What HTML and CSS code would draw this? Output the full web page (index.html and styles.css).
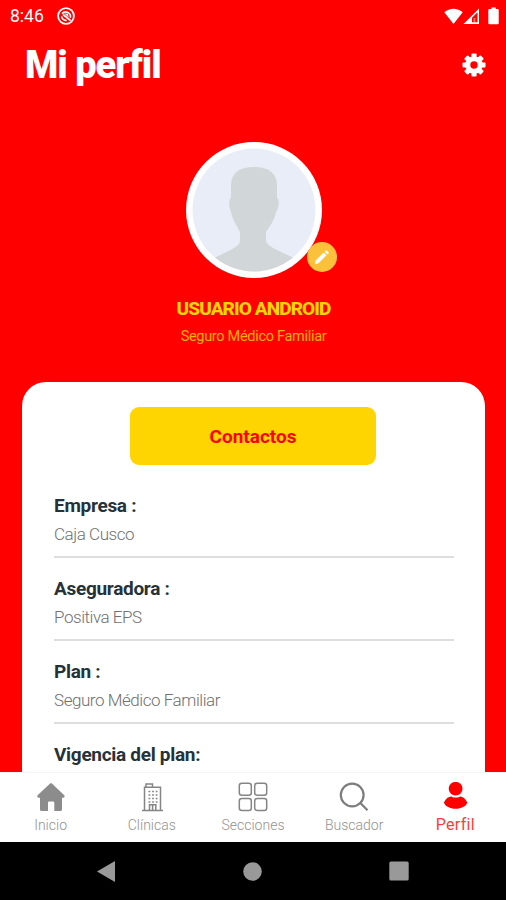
FILE: index.html
```html
<!DOCTYPE html>
<html lang="es">
<head>
    <meta charset="UTF-8">
    <meta name="viewport" content="width=device-width, initial-scale=1.0">
    <title>Mi perfil</title>
    <link rel="stylesheet" href="styles.css">
</head>
<body>
    <div class="app">
        <!-- Barra de estado -->
        <div class="status-bar">
            <span class="status-time">8:46</span>
            <svg class="status-app" width="18" height="18" viewBox="0 0 18 18" fill="none" stroke="#fff">
                <circle cx="9" cy="9" r="7.9" stroke-width="1.8"/>
                <path d="M5 6.8A4.7 4.7 0 0 1 13.3 10.8M4.6 9.4A4.5 4.5 0 0 0 9.6 13.4" stroke-width="1.6"/>
                <path d="M6 7.5L13.6 13.6" stroke-width="1.8"/>
                <path d="M7.2 6.2L11 7L11.6 10.6Z" fill="#fff" stroke="none"/>
            </svg>
            <div class="status-icons">
                <svg width="19" height="17" viewBox="0 0 19 17" fill="#fff">
                    <path d="M0.3 4.3C5.7-0.4 13.3-0.4 18.7 4.3L9.5 16Z"/>
                </svg>
                <svg width="17" height="17" viewBox="0 0 17 17" fill="#fff">
                    <path fill-rule="evenodd" d="M16 .5V16H.5ZM14.5 4.3L9 9.8V14.2H14.5Z"/>
                    <path d="M10.5 10H12.3V14.2H10.5Z" opacity=".45"/>
                </svg>
                <svg class="battery" width="11" height="18" viewBox="0 0 11 18" fill="#fff">
                    <path d="M3.3.5H7.7V2H9.7Q10.7 2 10.7 3V16.3Q10.7 17.3 9.7 17.3H1.3Q.3 17.3 .3 16.3V3Q.3 2 1.3 2H3.3Z"/>
                </svg>
            </div>
        </div>

        <header class="header">
            <h1 class="title">Mi perfil</h1>
            <svg class="settings" width="24" height="24" viewBox="0 0 24 24">
                <g fill="#fff">
                    <circle cx="12" cy="12" r="8.7"/>
                    <rect x="9.4" y=".5" width="5.2" height="23" rx="1"/>
                    <rect x="9.4" y=".5" width="5.2" height="23" rx="1" transform="rotate(45 12 12)"/>
                    <rect x="9.4" y=".5" width="5.2" height="23" rx="1" transform="rotate(90 12 12)"/>
                    <rect x="9.4" y=".5" width="5.2" height="23" rx="1" transform="rotate(135 12 12)"/>
                </g>
                <circle cx="12" cy="12" r="3.7" fill="#f00"/>
            </svg>
        </header>

        <!-- Datos del usuario -->
        <section class="profile">
            <div class="avatar">
                <svg width="136" height="136" viewBox="0 0 136 136">
                    <defs>
                        <clipPath id="face"><circle cx="68" cy="68" r="61.5"/></clipPath>
                    </defs>
                    <circle cx="68" cy="68" r="68" fill="#fff"/>
                    <circle cx="68" cy="68" r="61.5" fill="#e9edf7"/>
                    <path clip-path="url(#face)" fill="#d1d6d8" d="M45 44C45 31 53 25 68 25S91 31 91 44V56C94 57 93 66 90 70C88 79 84 84 80 90V99C81 105 94 109 108 116V136H28V116C42 109 54 105 54 99V90C51 84 47 79 45 70C43 66 42 57 45 56Z"/>
                </svg>
                <button class="edit" aria-label="Editar">
                    <svg width="14" height="14" viewBox="0 0 14 14" fill="#fff">
                        <path d="M0 14L.4 10.7L8.7 2.5L11.5 5.3L3.3 13.6ZM9.5 1.7L10.8.4Q11.3 0 11.8.4L13.6 2.2Q14 2.7 13.6 3.2L12.3 4.5Z"/>
                    </svg>
                </button>
            </div>
            <div class="user-name">USUARIO ANDROID</div>
            <div class="user-plan">Seguro Médico Familiar</div>
        </section>

        <main class="card">
            <button class="contacts">Contactos</button>
            <div class="field">
                <div class="label">Empresa :</div>
                <div class="value">Caja Cusco</div>
            </div>
            <div class="field">
                <div class="label">Aseguradora :</div>
                <div class="value">Positiva EPS</div>
            </div>
            <div class="field">
                <div class="label">Plan :</div>
                <div class="value">Seguro Médico Familiar</div>
            </div>
            <div class="field">
                <div class="label">Vigencia del plan:</div>
            </div>
        </main>

        <!-- Menú inferior -->
        <nav class="tabs">
            <a class="tab">
                <svg width="30" height="30" viewBox="0 0 30 30" fill="#8c8c8c">
                    <path d="M14.1 1.4Q15 .7 15.9 1.4L28.3 13.3Q29.3 15.5 27 15.7H26V27.5Q26 29 24.5 29H18.3V20.7Q18.3 19.5 17 19.5H13Q12 19.5 12 20.7V29H5.5Q4 29 4 27.5V15.7H2.5Q.5 15.3 1.6 13.3Z"/>
                </svg>
                <span>Inicio</span>
            </a>
            <a class="tab">
                <svg width="30" height="30" viewBox="0 0 30 30" fill="none" stroke="#858585" stroke-width="1.5">
                    <path d="M5 28.5H26M7.5 28V5.2H23.5V28M9 5V2H15.5V5M12.5 28V22.7H18.8V28M15.6 23V28"/>
                    <path d="M11.5 9.5H20.5M11.5 13H20.5M11.5 16.5H20.5M11.5 20H20.5" stroke-width="1.7" stroke-dasharray="1.8 1.8"/>
                </svg>
                <span>Clínicas</span>
            </a>
            <a class="tab">
                <svg width="30" height="30" viewBox="0 0 30 30" fill="none" stroke="#858585" stroke-width="1.5">
                    <rect x="1.3" y="1.2" width="12" height="12" rx="2.5"/>
                    <rect x="16.7" y="1.2" width="12" height="12" rx="2.5"/>
                    <rect x="1.3" y="16.5" width="12" height="12" rx="2.5"/>
                    <rect x="16.7" y="16.5" width="12" height="12" rx="2.5"/>
                </svg>
                <span>Secciones</span>
            </a>
            <a class="tab">
                <svg width="30" height="30" viewBox="0 0 30 30" fill="none" stroke="#7d7d7d" stroke-width="2.2">
                    <circle cx="13.2" cy="13" r="11.4"/>
                    <path d="M21.3 21L28.5 28.2"/>
                </svg>
                <span>Buscador</span>
            </a>
            <a class="tab tab-active">
                <svg width="30" height="30" viewBox="0 0 30 30" fill="#f00">
                    <circle cx="15.6" cy="6.7" r="6.9"/>
                    <path d="M3.9 20.5C5.8 16.5 8.8 14.2 11.4 14.4C13.1 16 18.1 16 19.8 14.4C22.4 14.2 25.4 16.5 27.3 20.5C26 24.4 21.1 26.8 15.6 26.8S5.2 24.4 3.9 20.5Z"/>
                </svg>
                <span>Perfil</span>
            </a>
        </nav>

        <div class="system-bar">
            <svg width="18" height="21" viewBox="0 0 18 21" fill="#999"><path d="M18 0V21L0 10.5Z"/></svg>
            <svg width="19" height="19" viewBox="0 0 19 19" fill="#999"><circle cx="9.5" cy="9.5" r="9.3"/></svg>
            <svg width="20" height="20" viewBox="0 0 20 20" fill="#999"><rect x=".3" y=".5" width="19.4" height="19" rx="1.5"/></svg>
        </div>
    </div>
</body>
</html>
```
FILE: styles.css
```css
* {
    box-sizing: border-box;
}
body {
    margin: 0;
    font-family: Roboto, "Liberation Sans", sans-serif;
    background: #f00;
}
button {
    border: none;
    padding: 0;
    font-family: inherit;
}
svg {
    display: block;
}
.app {
    width: 506px;
    height: 900px;
    display: flex;
    flex-direction: column;
    overflow: hidden;
    background: #f00;
}
.status-bar {
    display: flex;
    align-items: center;
    height: 32px;
    flex: none;
    padding: 0 7px 0 10px;
    color: #fff;
}
.status-time {
    width: 47px;
    font-size: 17.5px;
}
.status-icons {
    display: flex;
    align-items: center;
    margin-left: auto;
}
.battery {
    margin-left: 8px;
}
.header {
    display: flex;
    justify-content: space-between;
    align-items: center;
    height: 66px;
    flex: none;
    padding: 0 20px 0 25px;
}
.title {
    margin: 0;
    color: #fff;
    font-size: 38px;
    font-weight: 900;
    letter-spacing: -1px;
}
.profile {
    display: flex;
    flex-direction: column;
    align-items: center;
    flex: none;
    height: 284px;
    padding: 44px 0 0 1px;
}
.avatar {
    position: relative;
}
.edit {
    position: absolute;
    right: -15px;
    bottom: 6px;
    display: grid;
    place-items: center;
    width: 30px;
    height: 30px;
    border-radius: 50%;
    background: #fbc13a;
}
.user-name {
    margin-top: 19px;
    line-height: 24px;
    color: #ffd500;
    font-size: 19px;
    font-weight: 800;
    letter-spacing: -0.9px;
}
.user-plan {
    margin-top: 6px;
    line-height: 20px;
    color: #ffb000;
    font-size: 14.5px;
    letter-spacing: -0.3px;
}
.card {
    flex: 1;
    min-height: 0;
    overflow: hidden;
    margin: 0 21px 0 22px;
    padding: 25px 31px 0 32px;
    border-radius: 24px 24px 0 0;
    background: #fff;
}
.contacts {
    display: block;
    width: 246px;
    height: 58px;
    margin: 0 0 10px 76px;
    border-radius: 9px;
    background: #ffd500;
    color: #f00;
    font-size: 19px;
    font-weight: 700;
}
.field {
    height: 83px;
    padding-top: 19px;
    border-bottom: 2px solid #dedede;
}
.label {
    line-height: 24px;
    color: #263238;
    font-size: 19px;
    font-weight: 700;
    letter-spacing: -0.3px;
}
.value {
    margin-top: 5px;
    line-height: 22px;
    color: #707070;
    font-size: 17px;
    font-weight: 300;
    letter-spacing: -0.45px;
}
.tabs {
    display: grid;
    grid-template-columns: repeat(5, 1fr);
    height: 70px;
    flex: none;
    padding-top: 9px;
    border-top: 1px solid #f5f5f5;
    background: #fff;
}
.tab {
    display: flex;
    flex-direction: column;
    align-items: center;
    gap: 4px;
    color: #929292;
    font-size: 14px;
    font-weight: 300;
    line-height: 18px;
}
.tab-active {
    color: #ff3b3b;
    font-size: 16px;
    font-weight: 400;
    letter-spacing: 0.3px;
}
.system-bar {
    display: flex;
    align-items: center;
    justify-content: space-between;
    height: 58px;
    flex: none;
    padding: 0 97px;
    background: #000;
}
```
